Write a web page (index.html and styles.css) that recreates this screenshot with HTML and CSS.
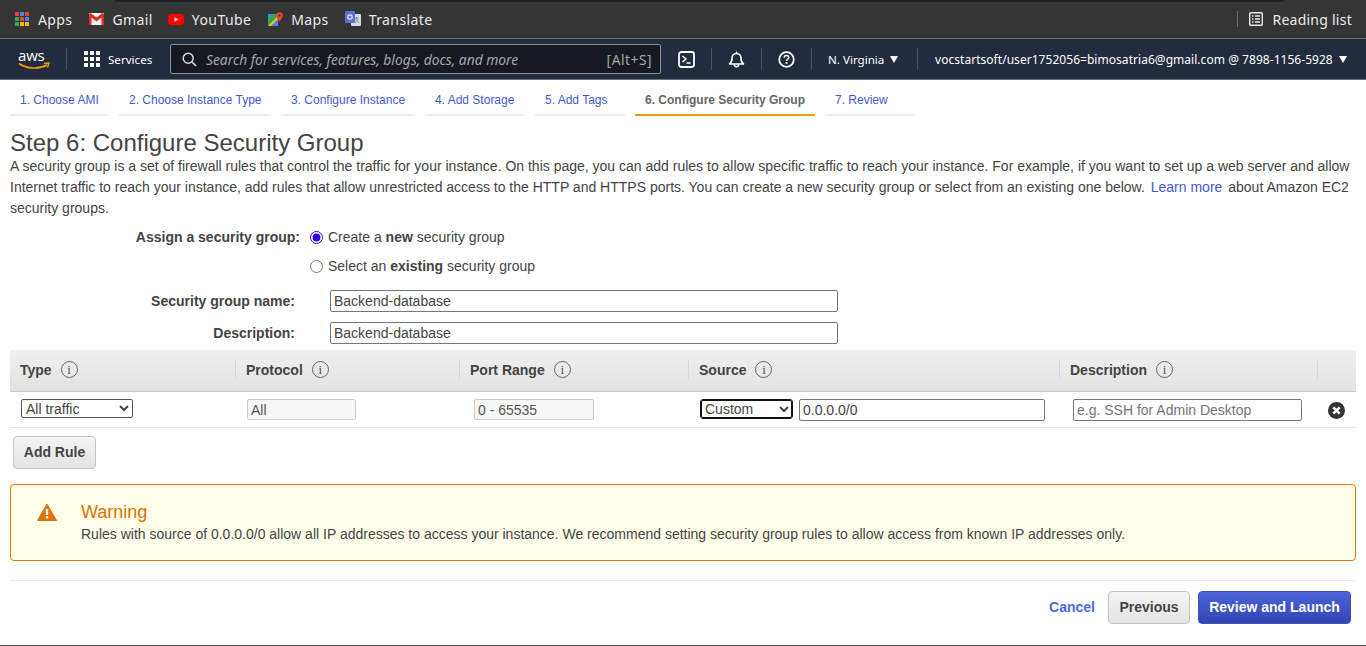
FILE: index.html
```html
<!DOCTYPE html>
<html lang="en">
<head>
    <meta charset="UTF-8">
    <title>Step 6: Configure Security Group</title>
    <link rel="stylesheet" href="styles.css">
</head>
<body>
    <!-- browser bookmarks -->
    <div class="bookmarks">
        <div class="tabstrip"></div>
        <div class="bookmark-row">
            <a class="bookmark bm-apps">
                <svg width="14" height="14" viewBox="0 0 14 14"><rect x="0" y="0" width="4" height="4" fill="#ea4335"/><rect x="5" y="0" width="4" height="4" fill="#4285f4"/><rect x="10" y="0" width="4" height="4" fill="#ea4335"/><rect x="0" y="5" width="4" height="4" fill="#34a853"/><rect x="5" y="5" width="4" height="4" fill="#ea4335"/><rect x="10" y="5" width="4" height="4" fill="#4285f4"/><rect x="0" y="10" width="4" height="4" fill="#34a853"/><rect x="5" y="10" width="4" height="4" fill="#fbbc05"/><rect x="10" y="10" width="4" height="4" fill="#fbbc05"/></svg>
                Apps
            </a>
            <a class="bookmark bm-gmail">
                <svg width="15" height="12" viewBox="0 0 15 12"><rect width="15" height="12" rx="1" fill="#f1f1f1"/><path d="M0 1.5V12H2.5V4.5L7.5 8.5L12.5 4.5V12H15V1.5L13.5 0L7.5 4.6L1.5 0Z" fill="#d93025"/></svg>
                Gmail
            </a>
            <a class="bookmark bm-youtube">
                <svg width="16" height="11" viewBox="0 0 16 11"><rect width="16" height="11" rx="3" fill="#f00"/><path d="M6.5 3.2V7.8L10.5 5.5Z" fill="#fff"/></svg>
                YouTube
            </a>
            <a class="bookmark bm-maps">
                <svg width="15" height="15" viewBox="0 0 15 15"><path d="M0 2H10V14H0Z" fill="#34a853"/><path d="M0 14L10 4V14Z" fill="#fbbc05"/><path d="M3 14L10 7V14Z" fill="#4285f4"/><path d="M0 2H5L0 7Z" fill="#4285f4"/><circle cx="11.5" cy="3.5" r="3.2" fill="#ea4335"/><path d="M9 5.5L11.5 10L14 5.5Z" fill="#ea4335"/><circle cx="11.5" cy="3.5" r="1.1" fill="#7a1c14"/></svg>
                Maps
            </a>
            <a class="bookmark bm-translate">
                <svg width="16" height="16" viewBox="0 0 16 16"><rect x="6" y="3" width="10" height="12" rx="1" fill="#d8dbe0"/><path d="M9 7H14M11.5 6V8M10 12L13 8M10.5 8L14 12" stroke="#8a8f98" stroke-width="1" fill="none"/><rect x="0" y="0" width="10" height="12" rx="1" fill="#5c6fd6"/><circle cx="5" cy="6" r="2.2" fill="none" stroke="#e8eaf6" stroke-width="1.2"/></svg>
                Translate
            </a>
            <div class="reading-list">
                <svg width="14" height="14" viewBox="0 0 14 14"><rect x="0.7" y="0.7" width="12.6" height="12.6" rx="1" fill="none" stroke="#e8eaed" stroke-width="1.4"/><path d="M3 4H4.5M6 4H11M3 7H4.5M6 7H11M3 10H4.5M6 10H11" stroke="#e8eaed" stroke-width="1.4"/></svg>
                Reading list
            </div>
        </div>
    </div>

    <!-- aws console nav -->
    <nav class="console-nav">
        <a class="aws-logo">
            <span class="aws-word">aws</span>
            <svg class="aws-smile" width="32" height="8" viewBox="0 0 32 8"><path d="M1 1.5C9 7 21 7.5 29 3" stroke="#f90" stroke-width="1.6" fill="none"/><path d="M26 1.5L31 1L29.5 5.5" stroke="#f90" stroke-width="1.3" fill="none"/></svg>
        </a>
        <span class="nav-sep sep-logo"></span>
        <a class="services">
            <svg width="16" height="16" viewBox="0 0 16 16" fill="#fff"><rect width="4" height="4"/><rect x="6" width="4" height="4"/><rect x="12" width="4" height="4"/><rect y="6" width="4" height="4"/><rect x="6" y="6" width="4" height="4"/><rect x="12" y="6" width="4" height="4"/><rect y="12" width="4" height="4"/><rect x="6" y="12" width="4" height="4"/><rect x="12" y="12" width="4" height="4"/></svg>
            Services
        </a>
        <div class="search">
            <svg width="15" height="15" viewBox="0 0 15 15"><circle cx="6.2" cy="6.2" r="5" fill="none" stroke="#d5dbdb" stroke-width="1.5"/><path d="M10 10L14 14" stroke="#d5dbdb" stroke-width="1.7"/></svg>
            <span class="search-hint">Search for services, features, blogs, docs, and more</span>
            <span class="search-key">[Alt+S]</span>
        </div>
        <a class="nav-icon">
            <svg width="17" height="17" viewBox="0 0 17 17"><rect x="1" y="1" width="15" height="15" rx="2.5" fill="none" stroke="#fff" stroke-width="1.8"/><path d="M4.5 5L8 8L4.5 11" fill="none" stroke="#fff" stroke-width="1.5"/><path d="M8.5 12H12.5" stroke="#fff" stroke-width="1.5"/></svg>
        </a>
        <span class="nav-sep"></span>
        <a class="nav-icon">
            <svg width="17" height="17" viewBox="0 0 17 17"><path d="M1.5 13C3.5 11.5 4 9.5 4 7.5C4 4.5 6 2.5 8.5 2.5C11 2.5 13 4.5 13 7.5C13 9.5 13.5 11.5 15.5 13Z" fill="none" stroke="#fff" stroke-width="1.6" stroke-linejoin="round"/><path d="M8.5 0.5V2.5" stroke="#fff" stroke-width="1.4"/><path d="M6.3 13.5A2.2 2.2 0 0 0 10.7 13.5" fill="none" stroke="#fff" stroke-width="1.5"/></svg>
        </a>
        <span class="nav-sep"></span>
        <a class="nav-icon">
            <svg width="17" height="17" viewBox="0 0 17 17"><circle cx="8.5" cy="8.5" r="7.3" fill="none" stroke="#fff" stroke-width="1.7"/><path d="M6.2 6.8C6.2 5.4 7.2 4.6 8.5 4.6C9.8 4.6 10.8 5.4 10.8 6.6C10.8 8.2 8.5 8.2 8.5 10" fill="none" stroke="#fff" stroke-width="1.5"/><rect x="7.6" y="11" width="1.8" height="1.8" fill="#fff"/></svg>
        </a>
        <span class="nav-sep"></span>
        <a class="nav-menu region">N. Virginia <i class="caret"></i></a>
        <span class="nav-sep"></span>
        <a class="nav-menu account">vocstartsoft/user1752056=bimosatria6@gmail.com @ 7898-1156-5928 <i class="caret"></i></a>
    </nav>

    <ul class="wizard-tabs">
        <li class="tab-ami">1. Choose AMI</li>
        <li class="tab-type">2. Choose Instance Type</li>
        <li class="tab-config">3. Configure Instance</li>
        <li class="tab-storage">4. Add Storage</li>
        <li class="tab-tags">5. Add Tags</li>
        <li class="tab-group active">6. Configure Security Group</li>
        <li class="tab-review">7. Review</li>
    </ul>

    <main class="content">
        <h1>Step 6: Configure Security Group</h1>
        <p class="intro">A security group is a set of firewall rules that control the traffic for your instance. On this page, you can add rules to allow specific traffic to reach your instance. For example, if you want to set up a web server and allow Internet traffic to reach your instance, add rules that allow unrestricted access to the HTTP and HTTPS ports. You can create a new security group or select from an existing one below. <a class="link">Learn more</a> about Amazon EC2 security groups.</p>

        <div class="assign-row">
            <span class="assign-label">Assign a security group:</span>
            <div class="radios">
                <label class="radio-line"><input type="radio" name="sg" checked> <span>Create a <b>new</b> security group</span></label>
                <label class="radio-line"><input type="radio" name="sg"> <span>Select an <b>existing</b> security group</span></label>
            </div>
        </div>

        <div class="field-row name-row">
            <label class="field-label">Security group name:</label>
            <input class="text-input field-input" type="text" value="Backend-database">
        </div>
        <div class="field-row desc-row">
            <label class="field-label">Description:</label>
            <input class="text-input field-input" type="text" value="Backend-database">
        </div>

        <div class="rules">
            <div class="rules-head">
                <div class="col-type"><span class="th">Type <i class="info">i</i></span></div>
                <div class="col-protocol"><span class="th">Protocol <i class="info">i</i></span></div>
                <div class="col-port"><span class="th">Port Range <i class="info">i</i></span></div>
                <div class="col-source"><span class="th">Source <i class="info">i</i></span></div>
                <div class="col-desc"><span class="th">Description <i class="info">i</i></span></div>
                <div class="col-remove"></div>
            </div>
            <div class="rules-row">
                <div class="col-type">
                    <select class="select type-select"><option>All traffic</option></select>
                </div>
                <div class="col-protocol"><input class="readonly protocol-input" type="text" value="All" readonly></div>
                <div class="col-port"><input class="readonly port-input" type="text" value="0 - 65535" readonly></div>
                <div class="col-source">
                    <select class="select source-select"><option>Custom</option></select>
                    <input class="text-input cidr-input" type="text" value="0.0.0.0/0">
                </div>
                <div class="col-desc"><input class="text-input desc-input" type="text" placeholder="e.g. SSH for Admin Desktop"></div>
                <div class="col-remove">
                    <svg width="17" height="17" viewBox="0 0 17 17"><circle cx="8.5" cy="8.5" r="8.5" fill="#333"/><path d="M5.3 5.3L11.7 11.7M11.7 5.3L5.3 11.7" stroke="#fff" stroke-width="2.4"/></svg>
                </div>
            </div>
        </div>

        <button class="btn add-rule">Add Rule</button>

        <div class="warning">
            <svg class="warning-icon" width="20" height="18" viewBox="0 0 20 18"><path d="M10 1L19.5 17.5H0.5Z" fill="#dd7200" stroke="#dd7200" stroke-linejoin="round"/><rect x="8.8" y="6" width="2.4" height="6" fill="#fff"/><rect x="8.8" y="13" width="2.4" height="2.4" fill="#fff"/></svg>
            <div>
                <div class="warning-title">Warning</div>
                <div class="warning-text">Rules with source of 0.0.0.0/0 allow all IP addresses to access your instance. We recommend setting security group rules to allow access from known IP addresses only.</div>
            </div>
        </div>

        <div class="actions">
            <a class="cancel">Cancel</a>
            <button class="btn previous">Previous</button>
            <button class="btn primary">Review and Launch</button>
        </div>
    </main>
    <div class="window-edge"></div>
</body>
</html>
```

FILE: styles.css
```css
html, body {
    height: 646px;
    overflow: hidden;
}

body {
    margin: 0;
    background: #fff;
    color: #444;
    font-family: "Liberation Sans", Arial, sans-serif;
    font-size: 14px;
    position: relative;
}

/* browser bookmarks */
.bookmarks {
    height: 38px;
    background: #353535;
    border-bottom: 1px solid #6e6e6e;
}

.tabstrip {
    height: 2px;
    margin: 0 82px 0 115px;
    background: #202124;
    border-radius: 0 0 8px 8px;
}

.bookmark-row {
    display: flex;
    align-items: center;
    height: 34px;
    color: #e8eaed;
    font-family: "Noto Sans", sans-serif;
    font-size: 14px;
    letter-spacing: 0.4px;
}

.bookmark {
    display: flex;
    align-items: center;
    gap: 8px;
}

.bm-apps { margin-left: 15px; gap: 9px; }
.bm-gmail { margin-left: 17px; }
.bm-youtube { margin-left: 15px; }
.bm-maps { margin-left: 17px; }
.bm-translate { margin-left: 16px; }

.reading-list {
    margin-left: auto;
    margin-right: 14px;
    padding-left: 11px;
    height: 16px;
    border-left: 1px solid #6e6e6e;
    display: flex;
    align-items: center;
    gap: 9px;
    letter-spacing: 0.25px;
}

/* console nav */
.console-nav {
    height: 40px;
    background: #232b3e;
    border-bottom: 1px solid #6b7280;
    display: flex;
    align-items: center;
    color: #fff;
    font-family: "Noto Sans", sans-serif;
    font-size: 12px;
}

.aws-logo {
    position: relative;
    width: 32px;
    height: 24px;
    margin-left: 18px;
}

.aws-word {
    display: block;
    font-family: "Open Sans", sans-serif;
    font-size: 15px;
    line-height: 16px;
    letter-spacing: -0.2px;
}

.aws-smile {
    position: absolute;
    left: 0;
    top: 15px;
}

.nav-sep {
    width: 1px;
    height: 22px;
    background: #4a5263;
}

.sep-logo {
    margin-left: 16px;
}

.services {
    display: flex;
    align-items: center;
    gap: 8px;
    margin-left: 17px;
    width: 86px;
    font-size: 11.6px;
}

.search {
    display: flex;
    align-items: center;
    box-sizing: border-box;
    width: 491px;
    height: 30px;
    padding: 0 8px 0 11px;
    background: #16191f;
    border: 1px solid #8d9199;
    border-radius: 2px;
    color: #a3a8ae;
    font-size: 13.8px;
}

.search-hint {
    margin-left: 9px;
    font-style: italic;
}

.search-key {
    margin-left: auto;
    letter-spacing: 0.5px;
}

.nav-icon {
    display: flex;
    justify-content: center;
    width: 49px;
}

.search + .nav-icon {
    width: 50px;
}

.nav-menu {
    display: flex;
    align-items: center;
    white-space: nowrap;
}

.region {
    box-sizing: border-box;
    width: 105px;
    padding-left: 16px;
    font-size: 11.6px;
}

.account {
    padding-left: 17px;
    letter-spacing: 0.04px;
}

.caret {
    width: 0;
    height: 0;
    margin-left: 6px;
    border-left: 4.5px solid transparent;
    border-right: 4.5px solid transparent;
    border-top: 7px solid #fff;
}

/* wizard */
.wizard-tabs {
    list-style: none;
    display: flex;
    gap: 10px;
    margin: 0;
    padding: 0 0 0 10px;
    height: 37px;
    color: #3f5bd0;
    font-size: 12px;
}

.wizard-tabs li {
    box-sizing: border-box;
    height: 36px;
    padding: 13px 0 0 10px;
    border-bottom: 2px solid #eee;
    white-space: nowrap;
}

.tab-ami { width: 99px; }
.tab-type { width: 152px; }
.tab-config { width: 134px; }
.tab-storage { width: 100px; }
.tab-tags { width: 90px; }
.tab-group { width: 180px; }
.tab-review { width: 90px; }

.wizard-tabs .active {
    color: #666;
    font-weight: bold;
    border-bottom-color: #f90;
}

.content {
    padding: 0 10px;
}

h1 {
    margin: 0;
    padding-top: 13px;
    font-size: 24px;
    font-weight: normal;
    line-height: 26px;
}

.intro {
    margin: 0;
    line-height: 21px;
    color: #444;
}

.link {
    color: #3f5bd0;
    margin: 0 2px;
}

.assign-row {
    display: flex;
    margin-top: 8px;
}

.assign-label {
    width: 290px;
    text-align: right;
    font-weight: bold;
    line-height: 20px;
}

.radios {
    margin-left: 10px;
}

.radio-line {
    display: flex;
    align-items: center;
    height: 20px;
    margin-bottom: 9px;
}

.radio-line input {
    margin: 0 5px 0 0;
    width: 13px;
    height: 13px;
    accent-color: #3300e0;
}

.field-row {
    display: flex;
    align-items: center;
    height: 22px;
    margin-bottom: 10px;
}

.name-row {
    margin-top: 5px;
}

.desc-row {
    margin-bottom: 6px;
}

.field-label {
    width: 285px;
    text-align: right;
    font-weight: bold;
}

.text-input {
    box-sizing: border-box;
    height: 22px;
    padding: 0 3px;
    border: 1px solid #777;
    border-radius: 2px;
    background: #fff;
    color: #444;
    font-family: inherit;
    font-size: 14px;
}

.field-input {
    width: 508px;
    margin-left: 35px;
}

/* rules table */
.rules-head {
    display: flex;
    align-items: center;
    height: 39px;
    padding-bottom: 2px;
    background: linear-gradient(#f0f0f0, #e2e2e2);
    border-bottom: 1px solid #c9c9c9;
}

.rules-head > div {
    box-sizing: border-box;
    height: 20px;
    padding-left: 10px;
    border-right: 1px solid #d8d8d8;
}

.th {
    display: flex;
    align-items: center;
    font-weight: bold;
    height: 20px;
}

.info {
    box-sizing: border-box;
    width: 17px;
    height: 17px;
    margin-left: 9px;
    border: 1px solid #666;
    border-radius: 50%;
    color: #555;
    font-family: "Liberation Serif", serif;
    font-style: normal;
    font-weight: normal;
    font-size: 13px;
    line-height: 15px;
    text-align: center;
}

.col-type { width: 226px; }
.col-protocol { width: 224px; }
.col-port { width: 229px; }
.col-source { width: 371px; }
.col-desc { width: 258px; }
.col-remove { width: 38px; }

.rules-head .col-remove {
    border-right: none;
    border-left: 1px solid #d8d8d8;
    margin-left: -1px;
}

.rules-row {
    display: flex;
    align-items: center;
    height: 35px;
    border-bottom: 1px solid #e4e4e4;
}

.rules-row > div {
    box-sizing: border-box;
    display: flex;
    align-items: center;
}

.rules-row .col-type { padding-left: 11px; }
.rules-row .col-protocol { padding-left: 11px; }
.rules-row .col-port { padding-left: 14px; }
.rules-row .col-source { padding-left: 11px; }
.rules-row .col-desc { padding-left: 13px; }
.rules-row .col-remove { padding: 1px 0 0 10px; }

.select {
    box-sizing: border-box;
    height: 19px;
    margin-bottom: 2px;
    padding: 0 0 2px;
    border: 1px solid #555;
    border-radius: 2px;
    background: #fff;
    color: #444;
    font-family: inherit;
    font-size: 14px;
}

.type-select { width: 112px; }

/* has focus in the screenshot, so the frame is heavier */
.source-select {
    width: 93px;
    height: 20px;
    border-color: #111;
    border-radius: 3px;
    outline: 1px solid #111;
    outline-offset: -2px;
}

.readonly {
    box-sizing: border-box;
    height: 21px;
    padding: 0 3px;
    border: 1px solid #ccc;
    border-radius: 2px;
    background: #f7f7f7;
    color: #555;
    font-family: inherit;
    font-size: 14px;
}

.protocol-input { width: 109px; }
.port-input { width: 120px; }

.cidr-input {
    width: 246px;
    margin-left: 6px;
}

.desc-input {
    width: 229px;
    padding-left: 3px;
}

.desc-input::placeholder {
    color: #757575;
}

/* buttons */
.btn {
    box-sizing: border-box;
    height: 33px;
    padding-bottom: 3px;
    border: 1px solid #c4c4c4;
    border-radius: 4px;
    background: linear-gradient(#f4f4f4, #e4e4e4);
    color: #444;
    font-family: inherit;
    font-size: 14px;
    font-weight: bold;
}

.add-rule {
    display: block;
    width: 83px;
    margin: 8px 0 0 3px;
}

.warning {
    display: flex;
    box-sizing: border-box;
    height: 77px;
    margin-top: 15px;
    padding: 16px 0 0 26px;
    background: #ffffe9;
    border: 1px solid #e07b00;
    border-radius: 4px;
}

.warning-icon {
    margin: 2px 24px 0 0;
}

.warning-title {
    color: #dd7200;
    font-size: 18px;
    line-height: 22px;
}

.warning-text {
    line-height: 22px;
}

.actions {
    display: flex;
    align-items: flex-start;
    justify-content: flex-end;
    box-sizing: border-box;
    height: 60px;
    margin-top: 19px;
    padding: 10px 5px 0 0;
    border-top: 1px solid #eaeaea;
}

.cancel {
    color: #4a6ae0;
    font-weight: bold;
    margin: 8px 13px 0 0;
}

.previous { width: 82px; }

.primary {
    width: 153px;
    margin-left: 8px;
    border-color: #3f51b5;
    background: linear-gradient(#4a64d8, #3344b4);
    color: #fff;
}

.window-edge {
    position: absolute;
    left: 0;
    right: 0;
    bottom: 0;
    height: 1px;
    background: #555;
}
```
